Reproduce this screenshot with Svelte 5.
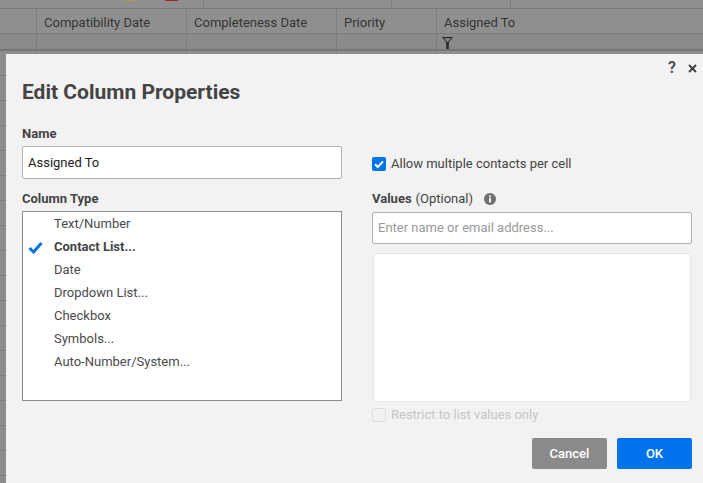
<script>
  let columns = ['', 'Compatibility Date', 'Completeness Date', 'Priority', 'Assigned To'];
  let types = ['Text/Number', 'Contact List...', 'Date', 'Dropdown List...', 'Checkbox', 'Symbols...', 'Auto-Number/System...'];
  let rows = Array.from({ length: 17 });
</script>

<div class="page">
  <div class="sheet">
    <div class="toolbar">
      <span class="swatch yellow"></span>
      <span class="swatch red"></span>
      <span class="tsep one"></span>
      <span class="tsep two"></span>
      <span class="tsep three"></span>
    </div>
    <div class="row head">
      {#each columns as c}
        <div class="cell">{c}</div>
      {/each}
    </div>
    <div class="row filter">
      {#each columns as c}
        <div class="cell">
          {#if c === 'Assigned To'}
            <svg width="11" height="12" viewBox="0 0 11 12"><path d="M0 0h11L6.8 5.5V12H4.2V5.5z M2.2 1.3l2.7 3.4h1.2l2.7-3.4z" fill="#2b2b2b" fill-rule="evenodd"/></svg>
          {/if}
        </div>
      {/each}
    </div>
    {#each rows as _}
      <div class="row body">
        {#each columns as c}
          <div class="cell"></div>
        {/each}
      </div>
    {/each}
  </div>

  <div class="dialog">
    <div class="top-icons">
      <span class="help">?</span>
      <svg class="close" width="9" height="9" viewBox="0 0 9 9"><path d="M1 1l7 7M8 1L1 8" stroke="#3d3d3d" stroke-width="1.8"/></svg>
    </div>
    <h1>Edit Column Properties</h1>
    <div class="cols">
      <div class="col">
        <div class="label first">Name</div>
        <div class="input name">Assigned To</div>
        <div class="label type">Column Type</div>
        <div class="list">
          {#each types as t, i}
            <div class="opt" class:sel={i === 1}>
              {#if i === 1}
                <svg class="tick" width="15" height="13" viewBox="0 0 15 13"><path d="M1.5 7l4 4L13.5 2" fill="none" stroke="#0073ec" stroke-width="3"/></svg>
              {/if}
              {t}
            </div>
          {/each}
        </div>
      </div>
      <div class="col right">
        <div class="check-row allow">
          <span class="box on">
            <svg width="14" height="14" viewBox="0 0 14 14"><path d="M3 7.2l2.8 2.8L11 4.4" fill="none" stroke="#fff" stroke-width="2"/></svg>
          </span>
          Allow multiple contacts per cell
        </div>
        <div class="label values"><b>Values</b> (Optional)
          <svg class="info" width="12" height="12" viewBox="0 0 12 12"><circle cx="6" cy="6" r="6" fill="#6f6f6f"/><rect x="5" y="5" width="2" height="4.5" fill="#f2f2f2"/><rect x="5" y="2.4" width="2" height="1.8" fill="#f2f2f2"/></svg>
        </div>
        <div class="input placeholder">Enter name or email address...</div>
        <div class="valuebox"></div>
        <div class="check-row restrict">
          <span class="box"></span>
          Restrict to list values only
        </div>
      </div>
    </div>
    <div class="buttons">
      <button class="cancel">Cancel</button>
      <button class="ok">OK</button>
    </div>
  </div>
</div>

<style>
  :global(body) { margin: 0; }
  .page {
    position: relative;
    width: 703px;
    height: 483px;
    overflow: hidden;
    background: #8c8c8c;
    font-family: Roboto, "Liberation Sans", sans-serif;
    font-size: 13px;
    color: #444;
  }
  .toolbar { position: relative; height: 9px; background: #8f8f8f; border-bottom: 1px solid #7a7a7a; box-sizing: border-box; }
  .swatch { position: absolute; top: 0; height: 1px; width: 13px; }
  .yellow { left: 123px; background: #a5a04a; }
  .red { left: 165px; background: #9c2a22; }
  .tsep { position: absolute; top: 0; height: 8px; width: 1px; background: #7d7d7d; }
  .one { left: 203px; }
  .two { left: 391px; }
  .three { left: 510px; }

  .row { display: grid; grid-template-columns: 37px 150px 150px 100px 1fr; box-sizing: border-box; }
  .cell { border-right: 1px solid #7d7d7d; box-sizing: border-box; overflow: hidden; white-space: nowrap; }
  .cell:last-child { border-right: 0; }
  .head { height: 25px; background: #8f8f8f; border-bottom: 1px solid #7d7d7d; color: #353535; }
  .head .cell { padding: 6px 0 0 7px; line-height: 16px; }
  .filter { height: 17px; background: #8a8a8a; border-bottom: 2px solid #757575; }
  .filter svg { display: block; margin: 3px 0 0 5px; }
  .body { height: 25px; background: #8d8d8d; border-bottom: 1px solid #7d7d7d; }

  .dialog {
    position: absolute;
    left: 6px;
    top: 54px;
    width: 697px;
    height: 429px;
    background: #f2f2f2;
    box-sizing: border-box;
    padding: 0 11px 0 16px;
  }
  .top-icons {
    position: absolute;
    top: 5px;
    right: 6px;
    display: flex;
    align-items: center;
    gap: 12px;
  }
  .help { font-size: 16px; line-height: 18px; font-weight: 700; color: #555; }
  .close { display: block; margin-top: 1px; }
  h1 { margin: 0; padding-top: 25px; font-size: 21px; line-height: 26px; font-weight: 700; color: #444; }

  .cols { display: grid; grid-template-columns: 320px 320px; gap: 30px; }
  .label { font-weight: 700; line-height: 16px; }
  .first { margin-top: 21px; }
  .input {
    height: 33px;
    box-sizing: border-box;
    background: #fff;
    border: 1px solid #b3b3b3;
    border-radius: 2px;
    padding: 0 5px;
    line-height: 31px;
    color: #222;
  }
  .name { margin-top: 4px; }
  .type { margin-top: 12px; }
  .list {
    margin-top: 4px;
    height: 190px;
    box-sizing: border-box;
    background: #fff;
    border: 1px solid #8e8e8e;
    padding-top: 1px;
  }
  .opt { position: relative; height: 23px; line-height: 21px; padding-left: 31px; color: #4a4a4a; }
  .sel { font-weight: 700; color: #444; }
  .tick { position: absolute; left: 5px; top: 5px; }

  .right { padding-top: 51px; }
  .check-row { display: flex; align-items: center; gap: 5px; line-height: 16px; }
  .box {
    width: 14px;
    height: 14px;
    box-sizing: border-box;
    border: 1px solid #dedede;
    border-radius: 2px;
    background: #f2f2f2;
    display: block;
  }
  .box.on { background: #0073ec; border: 0; }
  .box svg { display: block; }
  .values { margin-top: 19px; font-weight: 400; display: flex; align-items: center; gap: 4px; }
  .values b { font-weight: 700; }
  .info { margin-left: 7px; }
  .placeholder { margin-top: 5px; color: #9a9a9a; height: 32px; line-height: 30px; }
  .valuebox {
    margin: 9px 0 0 1px;
    height: 149px;
    width: 318px;
    box-sizing: border-box;
    background: #fff;
    border: 1px solid #e6e6e6;
    border-radius: 2px;
  }
  .restrict { margin-top: 5px; color: #c6c6c6; }

  .buttons { display: flex; justify-content: flex-end; gap: 10px; margin-top: 15px; }
  button {
    width: 75px;
    height: 31px;
    border: 0;
    border-radius: 2px;
    color: #fff;
    font: 500 13px Roboto, "Liberation Sans", sans-serif;
    padding: 0;
  }
  .cancel { background: #8a8a8a; }
  .ok { background: #0073ec; }
</style>
